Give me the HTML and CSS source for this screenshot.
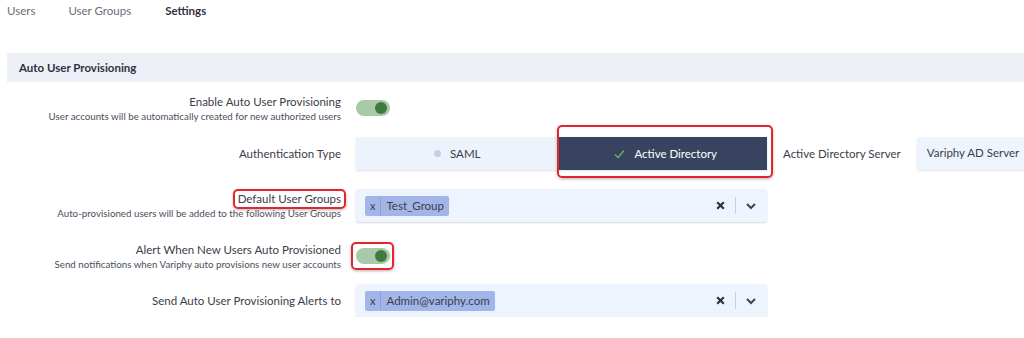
FILE: index.html
```html
<!DOCTYPE html>
<html lang="en">
<head>
    <meta charset="UTF-8">
    <title>Settings - Auto User Provisioning</title>
    <link rel="stylesheet" href="styles.css">
</head>
<body>
    <!-- Tabs -->
    <nav class="tabs">
        <a class="tab">Users</a>
        <a class="tab">User Groups</a>
        <a class="tab active">Settings</a>
    </nav>

    <!-- Section -->
    <div class="section-header">Auto User Provisioning</div>

    <div class="form">
        <div class="row row-toggle first">
            <div class="label">
                <div class="title">Enable Auto User Provisioning</div>
                <div class="hint">User accounts will be automatically created for new authorized users</div>
            </div>
            <div class="control">
                <span class="toggle on"><span class="knob"></span></span>
            </div>
        </div>

        <div class="row row-field second">
            <div class="label">
                <div class="title">Authentication Type</div>
            </div>
            <div class="control">
                <div class="segmented">
                    <div class="segment">
                        <span class="dot"></span>SAML
                    </div>
                    <div class="segment selected marked">
                        <svg class="check" width="11" height="10" viewBox="0 0 11 10">
                            <path d="M1 5.5 L4 8.5 L10 1.5" fill="none" stroke="#5db85c" stroke-width="1.4"/>
                        </svg>Active Directory
                    </div>
                </div>
                <span class="side-label">Active Directory Server</span>
                <div class="text-input">Variphy AD Server</div>
            </div>
        </div>

        <div class="row row-field">
            <div class="label">
                <div class="title"><span class="marked-text">Default User Groups</span></div>
                <div class="hint">Auto-provisioned users will be added to the following User Groups</div>
            </div>
            <div class="control">
                <div class="select">
                    <span class="tag"><span class="tag-x">x</span><span class="tag-text">Test_Group</span></span>
                    <span class="select-tools">
                        <svg width="9" height="9" viewBox="0 0 9 9"><path d="M1.2 1.2 L7.8 7.8 M7.8 1.2 L1.2 7.8" stroke="#2f3140" stroke-width="2.2"/></svg>
                        <span class="sep"></span>
                        <svg width="12" height="8" viewBox="0 0 12 8"><path d="M2 2 L6 6 L10 2" fill="none" stroke="#3a4560" stroke-width="2"/></svg>
                    </span>
                </div>
            </div>
        </div>

        <div class="row row-toggle">
            <div class="label">
                <div class="title">Alert When New Users Auto Provisioned</div>
                <div class="hint">Send notifications when Variphy auto provisions new user accounts</div>
            </div>
            <div class="control">
                <span class="toggle on marked-toggle"><span class="knob"></span></span>
            </div>
        </div>

        <div class="row row-field last">
            <div class="label">
                <div class="title">Send Auto User Provisioning Alerts to</div>
            </div>
            <div class="control">
                <div class="select">
                    <span class="tag"><span class="tag-x">x</span><span class="tag-text">Admin@variphy.com</span></span>
                    <span class="select-tools">
                        <svg width="9" height="9" viewBox="0 0 9 9"><path d="M1.2 1.2 L7.8 7.8 M7.8 1.2 L1.2 7.8" stroke="#2f3140" stroke-width="2.2"/></svg>
                        <span class="sep"></span>
                        <svg width="12" height="8" viewBox="0 0 12 8"><path d="M2 2 L6 6 L10 2" fill="none" stroke="#3a4560" stroke-width="2"/></svg>
                    </span>
                </div>
            </div>
        </div>
    </div>
</body>
</html>
```

FILE: styles.css
```css
body {
    margin: 0;
    font-family: Lato, "Open Sans", sans-serif;
    color: #3b3d4a;
    background: #fff;
    overflow: hidden;
}

/* Tabs */
.tabs {
    display: flex;
    padding: 4px 0 0 7px;
    height: 20px;
    font-size: 11.5px;
}

.tab {
    color: #6b6e7a;
    margin-right: 33px;
}

.tab:nth-child(2) {
    margin-right: 34px;
}

.tab.active {
    color: #2f3140;
    font-weight: bold;
}

/* Section header */
.section-header {
    margin: 29px 0 0 7px;
    height: 29px;
    line-height: 29px;
    padding-left: 12px;
    background: #eef0f7;
    font-size: 11.5px;
    font-weight: bold;
    color: #2f3140;
}

/* Form rows */
.form {
    padding-top: 11px;
}

.row {
    display: grid;
    grid-template-columns: 341px 1fr;
    column-gap: 15px;
    align-items: center;
    margin-top: 19px;
}

.row.first {
    margin-top: 0;
}

.row.second {
    margin-top: 14px;
}

.row.last {
    margin-top: 13px;
}

.row-toggle {
    height: 30px;
}

.row-field {
    height: 33px;
}

.label {
    text-align: right;
}

.title {
    font-size: 11.5px;
    color: #3b3d4a;
    line-height: 15px;
}

.hint {
    font-size: 9.75px;
    color: #4b4e5c;
    line-height: 14px;
}

.control {
    display: flex;
    align-items: center;
}

/* Toggle */
.toggle {
    position: relative;
    display: inline-block;
    width: 34px;
    height: 16px;
    border-radius: 8px;
    background: #a8caa8;
}

.toggle .knob {
    position: absolute;
    top: 2px;
    right: 3px;
    width: 12px;
    height: 12px;
    border-radius: 50%;
    background: #3f7a3f;
}

/* Segmented control */
.segmented {
    display: flex;
    width: 411px;
    height: 33px;
    box-shadow: 0 1px 2px rgba(0, 0, 0, 0.12);
}

.segment {
    flex: 1;
    display: flex;
    align-items: center;
    justify-content: center;
    background: #edf3fc;
    font-size: 11.5px;
    color: #3b3d4a;
}

.segment .dot {
    width: 7px;
    height: 7px;
    border-radius: 50%;
    background: #c7cde2;
    margin-right: 9px;
}

.segment.selected {
    background: #38445f;
    color: #fff;
    padding-left: 6px;
}

.segment .check {
    margin-right: 9px;
}

.side-label {
    margin-left: 16px;
    font-size: 11.5px;
    color: #3b3d4a;
    white-space: nowrap;
}

.text-input {
    margin-left: 16px;
    flex: 1;
    min-width: 0;
    height: 33px;
    line-height: 31px;
    padding-left: 10px;
    background: #eef4fd;
    border-radius: 3px 0 0 3px;
    box-shadow: 0 1px 2px rgba(0, 0, 0, 0.12);
    font-size: 11.5px;
    color: #3b3d4a;
    white-space: nowrap;
}

/* Multi select */
.select {
    display: flex;
    align-items: center;
    width: 411px;
    height: 33px;
    padding-left: 9px;
    box-sizing: border-box;
    background: #eef4fd;
    border-radius: 3px;
    box-shadow: 0 1px 2px rgba(0, 0, 0, 0.15);
}

.tag {
    display: flex;
    align-items: center;
    height: 20px;
    background: #a2b5e8;
    border-radius: 2px;
    font-size: 11.5px;
    color: #3b3d4a;
}

.tag-x {
    padding: 0 5px;
    border-right: 1px solid #8c9fd4;
    line-height: 18px;
    font-size: 11px;
}

.tag-text {
    padding: 0 5px 0 5px;
}

.select-tools {
    margin-left: auto;
    display: flex;
    align-items: center;
    padding-right: 10px;
}

.sep {
    width: 1px;
    height: 17px;
    background: #c9cfdc;
    margin: 0 9px 0 10px;
}

/* Red annotation outlines */
.marked {
    position: relative;
}

.marked::after {
    content: "";
    position: absolute;
    left: -2px;
    right: -6px;
    top: -12px;
    bottom: -8px;
    border: 2px solid #e3262b;
    border-radius: 5px;
    box-shadow: 0 1px 3px rgba(0, 0, 0, 0.3);
}

.marked-text {
    position: relative;
}

.marked-text::after {
    content: "";
    position: absolute;
    left: -5px;
    right: -5px;
    top: -3px;
    bottom: -4px;
    border: 2px solid #e3262b;
    border-radius: 5px;
    box-shadow: 0 1px 3px rgba(0, 0, 0, 0.3);
}

.marked-toggle::after {
    content: "";
    position: absolute;
    left: -5px;
    right: -4px;
    top: -6px;
    bottom: -6px;
    border: 2px solid #e3262b;
    border-radius: 5px;
    box-shadow: 0 1px 3px rgba(0, 0, 0, 0.3);
}
```
